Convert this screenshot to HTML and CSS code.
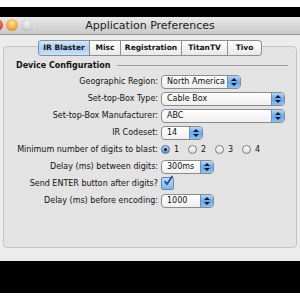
FILE: index.html
```html
<!DOCTYPE html>
<html lang="en">
<head>
    <meta charset="UTF-8">
    <title>Application Preferences</title>
    <link rel="stylesheet" href="styles.css">
</head>
<body>
    <div class="gap-top"></div>
    <div class="black-top"></div>
    <div class="window">
        <div class="titlebar">
            <div class="lights">
                <span class="light red"></span>
                <span class="light orange"></span>
                <span class="light gray"></span>
            </div>
            <div class="title">Application Preferences</div>
        </div>
        <div class="content">
            <div class="tabs">
                <span class="tab active t-ir">IR Blaster</span>
                <span class="tab t-misc">Misc</span>
                <span class="tab t-reg">Registration</span>
                <span class="tab t-titan">TitanTV</span>
                <span class="tab last t-tivo">Tivo</span>
            </div>
            <div class="panel">
                <div class="section-head">
                    <span>Device Configuration</span>
                    <div class="rule"></div>
                </div>
                <div class="form">
                    <label>Geographic Region:</label>
                    <div class="popup w-region"><span>North America</span><i class="cap"></i></div>

                    <label>Set-top-Box Type:</label>
                    <div class="popup w-wide"><span>Cable Box</span><i class="cap"></i></div>

                    <label>Set-top-Box Manufacturer:</label>
                    <div class="popup w-wide"><span>ABC</span><i class="cap"></i></div>

                    <label>IR Codeset:</label>
                    <div class="popup w-code"><span>14</span><i class="cap"></i></div>

                    <label>Minimum number of digits to blast:</label>
                    <div class="radios">
                        <span class="radio on"></span><span class="rlabel">1</span>
                        <span class="radio"></span><span class="rlabel">2</span>
                        <span class="radio"></span><span class="rlabel">3</span>
                        <span class="radio"></span><span class="rlabel">4</span>
                    </div>

                    <label>Delay (ms) between digits:</label>
                    <div class="popup w-delay"><span>300ms</span><i class="cap"></i></div>

                    <label>Send ENTER button after digits?</label>
                    <div class="check">
                        <svg width="12" height="12" viewBox="0 0 12 12">
                            <path d="M2.5 6 L5 9 L10.5 1" fill="none" stroke="#1f4f9c" stroke-width="1.8"/>
                        </svg>
                    </div>

                    <label>Delay (ms) before encoding:</label>
                    <div class="popup w-delay"><span>1000</span><i class="cap"></i></div>
                </div>
            </div>
        </div>
    </div>
    <div class="black-bottom"></div>
</body>
</html>
```

FILE: styles.css
```css
body {
    margin: 0;
    background: #fff;
    font-family: "DejaVu Sans", Verdana, sans-serif;
    font-size: 8px;
    color: #111;
}
.gap-top {
    height: 7px;
}
.black-top {
    height: 10px;
    background: #000;
}
.black-bottom {
    height: 32px;
    background: #000;
}
.window {
    height: 244px;
    background: #ececec;
    display: flex;
    flex-direction: column;
}
.titlebar {
    height: 18px;
    position: relative;
    background: linear-gradient(#e9e9e9, #c9c9c9);
    border-bottom: 1px solid #9a9a9a;
    box-sizing: border-box;
}
.lights {
    position: absolute;
    left: -9px;
    top: 2px;
    display: flex;
    gap: 3px;
}
.light {
    width: 12px;
    height: 12px;
    border-radius: 50%;
    box-sizing: border-box;
}
.red {
    background: radial-gradient(circle at 50% 35%, #ffb0a0, #e0433a 60%, #a8241d);
}
.orange {
    background: radial-gradient(circle at 50% 35%, #ffe7a0, #f2a53c 60%, #b9731c);
}
.gray {
    background: radial-gradient(circle at 50% 35%, #f4f4f4, #cfcfcf 60%, #9c9c9c);
}
.title {
    text-align: center;
    font-size: 11px;
    line-height: 17px;
    color: #222;
}
.content {
    flex: 1;
    padding: 5px 3px 13px 3px;
    display: flex;
    flex-direction: column;
    position: relative;
}
.tabs {
    position: absolute;
    top: 5px;
    left: 38px;
    display: flex;
    height: 16px;
    z-index: 2;
}
.tab {
    box-sizing: border-box;
    white-space: nowrap;
    text-align: center;
    font-weight: bold;
    font-size: 7.5px;
    line-height: 14px;
    background: linear-gradient(#ffffff, #e8e8e8);
    border: 1px solid #8e8e8e;
    border-left: none;
    color: #111;
}
.tab.active {
    border-left: 1px solid #7a8aa8;
    border-radius: 4px 0 0 4px;
    background: linear-gradient(#d6e8fb, #a9cdf3 50%, #c9e3fb);
}
.tab.last {
    border-radius: 0 4px 4px 0;
}
.t-ir {
    width: 52px;
}
.t-misc {
    width: 31px;
}
.t-reg {
    width: 61px;
}
.t-titan {
    width: 46px;
}
.t-tivo {
    width: 34px;
}
.panel {
    flex: 1;
    margin-top: 6px;
    background: #e3e3e3;
    border: 1px solid #c4c4c4;
    border-radius: 4px;
    padding: 11px 8px 0 12px;
}
.section-head {
    display: flex;
    align-items: center;
    gap: 6px;
    font-weight: bold;
    font-size: 8px;
    height: 12px;
    margin-top: 1px;
}
.rule {
    flex: 1;
    height: 1px;
    background: #9e9e9e;
}
.form {
    display: grid;
    grid-template-columns: 142px auto;
    column-gap: 3px;
    row-gap: 2px;
    margin-top: 3px;
    align-items: center;
}
.form label {
    text-align: right;
    line-height: 15px;
}
.popup {
    height: 14px;
    box-sizing: border-box;
    border: 1px solid #8b8b8b;
    border-radius: 4px;
    background: linear-gradient(#ffffff, #efefef);
    display: flex;
    align-items: center;
    padding-left: 5px;
    overflow: hidden;
    white-space: nowrap;
}
.popup span {
    flex: 1;
    line-height: 12px;
}
.cap {
    width: 12px;
    align-self: stretch;
    background: linear-gradient(#b7d6f7, #6aa7ea 50%, #8cc0f4);
    border-left: 1px solid #6f8fb8;
    position: relative;
}
.cap::before,
.cap::after {
    content: "";
    position: absolute;
    left: 3px;
    border-left: 3px solid transparent;
    border-right: 3px solid transparent;
}
.cap::before {
    top: 2px;
    border-bottom: 3px solid #0c1a30;
}
.cap::after {
    bottom: 2px;
    border-top: 3px solid #0c1a30;
}
.w-region {
    width: 80px;
}
.w-wide {
    width: 124px;
}
.w-code {
    width: 42px;
}
.w-delay {
    width: 53px;
}
.radios {
    display: flex;
    align-items: center;
    height: 15px;
}
.radio {
    width: 9px;
    height: 9px;
    border-radius: 50%;
    border: 1px solid #7d7d7d;
    background: linear-gradient(#fdfdfd, #dedede);
    box-sizing: border-box;
    position: relative;
}
.radio.on {
    background: linear-gradient(#b9d7f8, #5e9de6);
    border-color: #4b6e9c;
}
.radio.on::after {
    content: "";
    position: absolute;
    left: 2px;
    top: 2px;
    width: 3px;
    height: 3px;
    border-radius: 50%;
    background: #111;
}
.rlabel {
    width: 5px;
    margin: 0 9px 0 4px;
}
.check {
    width: 11px;
    height: 11px;
    border: 1px solid #6b86ae;
    border-radius: 2px;
    background: linear-gradient(#c4def9, #7fb4ee);
    position: relative;
}
.check svg {
    position: absolute;
    left: 0;
    top: -3px;
}
```
